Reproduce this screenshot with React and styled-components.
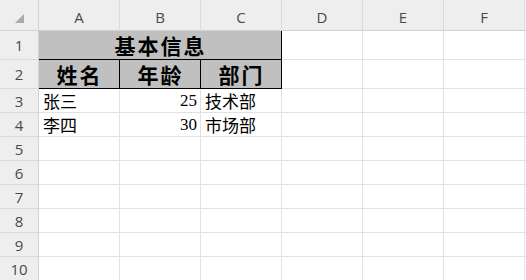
import React from "react";
import styled, { createGlobalStyle } from "styled-components";

const GlobalStyle = createGlobalStyle`
  html, body {
    margin: 0;
    padding: 0;
    background: #ffffff;
    overflow: hidden;
  }
`;

const COLS = ["A", "B", "C", "D", "E", "F"];

const Sheet = styled.div`
  display: grid;
  grid-template-columns: 39px repeat(6, 81px) 1fr;
  grid-template-rows: 31px 29px 29px repeat(8, 24px);
  width: 526px;
  height: 280px;
  overflow: hidden;
  font-family: "Noto Sans CJK SC", "Liberation Serif", serif;
`;

const Corner = styled.div`
  background: #eeeeee;
  border-right: 1px solid #d2d2d2;
  border-bottom: 1px solid #d2d2d2;
  display: flex;
  align-items: center;
  justify-content: center;
  padding: 6px 0 0 0;
  box-sizing: border-box;
`;

const ColHead = styled.div`
  background: #eeeeee;
  border-right: 1px solid #dadada;
  border-bottom: 1px solid #d2d2d2;
  display: flex;
  align-items: center;
  justify-content: center;
  font-family: "Open Sans", "Liberation Sans", sans-serif;
  font-size: 15px;
  color: #4a4a4a;
  padding-top: 3px;
  box-sizing: border-box;
`;

const Filler = styled.div`
  background: ${(p) => (p.$head ? "#eeeeee" : "#ffffff")};
  border-bottom: 1px solid ${(p) => (p.$head ? "#d2d2d2" : "#e2e2e2")};
  border-left: 1px solid #e2e2e2;
  margin-left: -1px;
`;

const RowHead = styled.div`
  background: #eeeeee;
  border-right: 1px solid #d2d2d2;
  border-bottom: 1px solid #dadada;
  display: flex;
  align-items: center;
  justify-content: center;
  font-family: "Open Sans", "Liberation Sans", sans-serif;
  font-size: 15px;
  color: #4a4a4a;
  box-sizing: border-box;
`;

const Cell = styled.div`
  grid-column: ${(p) => (p.$span ? `span ${p.$span}` : "auto")};
  background: ${(p) => (p.$fill ? "#c0c0c0" : "#ffffff")};
  border-right: 1px solid ${(p) => (p.$edge ? "#000000" : "#e2e2e2")};
  border-bottom: 1px solid ${(p) => (p.$edge ? "#000000" : "#e2e2e2")};
  display: flex;
  align-items: center;
  justify-content: ${(p) =>
    p.$align === "center" ? "center" : p.$align === "right" ? "flex-end" : "flex-start"};
  padding: 0 3px 0 4px;
  box-sizing: border-box;
  font-size: ${(p) => (p.$title ? "21px" : "17px")};
  font-weight: ${(p) => (p.$title ? 700 : 400)};
  letter-spacing: ${(p) => (p.$title ? "2px" : "0")};
  color: #000000;
  white-space: nowrap;
  line-height: 20px;
  min-width: 0;
`;

const Num = styled.span`
  font-family: "Liberation Serif", serif;
  font-size: 17px;
`;

const Triangle = () => (
  <svg width="9" height="9" viewBox="0 0 9 9">
    <polygon points="9,0 9,9 0,9" fill="#a9a9a9" />
  </svg>
);

const data = [
  ["张三", "25", "技术部"],
  ["李四", "30", "市场部"],
];

export default function App() {
  return (
    <>
      <GlobalStyle />
      <Sheet>
        <Corner>
          <Triangle />
        </Corner>
        {COLS.map((c) => (
          <ColHead key={c}>{c}</ColHead>
        ))}
        <Filler $head />

        <RowHead>1</RowHead>
        <Cell $span={3} $fill $edge $title $align="center">
          基本信息
        </Cell>
        <Cell />
        <Cell />
        <Cell />
        <Filler />

        <RowHead>2</RowHead>
        {["姓名", "年龄", "部门"].map((t) => (
          <Cell key={t} $fill $edge $title $align="center">
            {t}
          </Cell>
        ))}
        <Cell />
        <Cell />
        <Cell />
        <Filler />

        {data.map((row, i) => (
          <React.Fragment key={i}>
            <RowHead>{i + 3}</RowHead>
            <Cell>{row[0]}</Cell>
            <Cell $align="right">
              <Num>{row[1]}</Num>
            </Cell>
            <Cell>{row[2]}</Cell>
            <Cell />
            <Cell />
            <Cell />
            <Filler />
          </React.Fragment>
        ))}

        {[5, 6, 7, 8, 9, 10].map((n) => (
          <React.Fragment key={n}>
            <RowHead>{n}</RowHead>
            {COLS.map((c) => (
              <Cell key={c} />
            ))}
            <Filler />
          </React.Fragment>
        ))}
      </Sheet>
    </>
  );
}
